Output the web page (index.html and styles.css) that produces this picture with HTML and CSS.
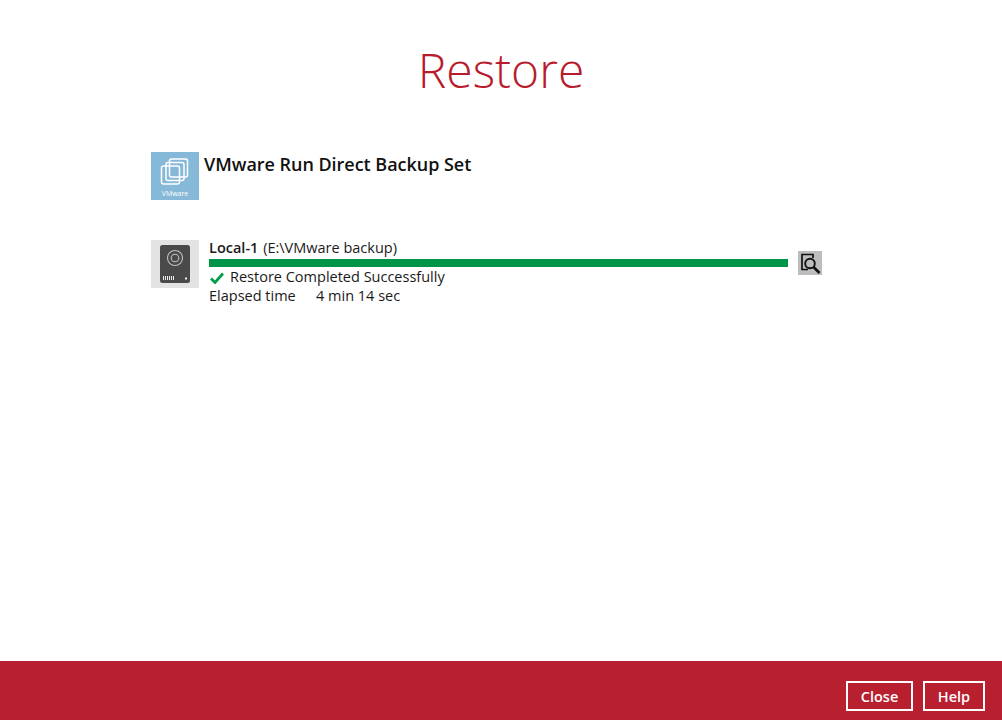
FILE: index.html
```html
<!DOCTYPE html>
<html lang="en">
<head>
<meta charset="utf-8">
<title>Restore</title>
<link rel="stylesheet" href="styles.css">
</head>
<body>
<main class="main">
  <h1 class="title">Restore</h1>
  <section class="set">
    <div class="set-icon">
      <svg class="vm-svg" width="30" height="30" viewBox="0 0 30 30" fill="none" stroke="#fff" stroke-width="1.5">
        <rect x="9.5" y="1" width="18" height="18" rx="2"/>
        <rect x="6" y="4.5" width="18" height="18" rx="2"/>
        <rect x="1.5" y="8" width="18" height="18" rx="2"/>
      </svg>
      <span class="vm-label">VMware</span>
    </div>
    <h2 class="set-name">VMware Run Direct Backup Set</h2>
  </section>
  <section class="dest">
    <div class="dest-icon">
      <svg width="30" height="38" viewBox="0 0 30 38">
        <rect width="30" height="38" rx="2.5" fill="#4a4a4a"/>
        <circle cx="15" cy="13" r="7.5" fill="none" stroke="#c0c0c0" stroke-width="1.1"/>
        <circle cx="15" cy="13" r="3.8" fill="none" stroke="#c0c0c0" stroke-width="1.1"/>
        <path d="M3.5 31v4M5.5 31v4M7.5 31v4M9.5 31v4M11.5 31v4M13.5 31v4" stroke="#eee" stroke-width="1"/>
        <rect x="25" y="32.5" width="2" height="2" fill="#eee"/>
      </svg>
    </div>
    <div class="dest-body">
      <div class="dest-name"><b class="dest-strong">Local-1</b> <span class="dest-path">(E:\VMware backup)</span></div>
      <div class="bar"></div>
      <div class="status">
        <svg class="check" width="14" height="12" viewBox="0 0 14 12"><path d="M1 6.5 L5 10.5 L13 1.5" fill="none" stroke="#00a04a" stroke-width="2.8"/></svg>
        <span>Restore Completed Successfully</span>
      </div>
      <div class="elapsed"><span class="elapsed-label">Elapsed time</span><span>4 min 14 sec</span></div>
    </div>
    <button class="log-btn" type="button" aria-label="Show log">
      <svg width="24" height="24" viewBox="0 0 24 24" fill="none" stroke="#111">
        <path d="M10 18.5H4V3.5H15V7" stroke-width="1.7"/>
        <circle cx="12" cy="12.5" r="4.8" stroke-width="1.9"/>
        <path d="M15.5 16L21.5 22" stroke-width="2.6"/>
      </svg>
    </button>
  </section>
</main>
<footer class="footer">
  <button class="btn btn-close" type="button">Close</button>
  <button class="btn btn-help" type="button">Help</button>
</footer>
</body>
</html>
```

FILE: styles.css
```css
* { box-sizing: border-box; }
html, body { margin: 0; height: 100%; }
body {
  display: flex;
  flex-direction: column;
  height: 720px;
  overflow: hidden;
  background: #fff;
  color: #1a1a1a;
  font-family: "Open Sans", sans-serif;
  font-size: 14.5px;
}
.main { flex: 1; padding: 0 151px; }
.title {
  margin: 0;
  padding-top: 37px;
  height: 152px;
  text-align: center;
  font-size: 48px;
  line-height: 66px;
  font-weight: 300;
  color: #b81c2c;
}
.set { display: flex; height: 88px; }
.set-icon {
  position: relative;
  width: 48px;
  height: 48px;
  background: #86b8d8;
  flex: none;
}
.vm-svg { position: absolute; left: 9px; top: 6px; }
.vm-label {
  position: absolute;
  left: 0;
  right: 0;
  top: 37px;
  text-align: center;
  font-size: 7px;
  line-height: 10px;
  font-weight: 400;
  color: #fff;
}
.set-name {
  margin: 0 0 0 5px;
  font-size: 18px;
  line-height: 24px;
  font-weight: 600;
  letter-spacing: -0.03px;
  color: #111;
}
.dest { display: flex; align-items: flex-start; }
.dest-icon {
  width: 48px;
  height: 48px;
  background: #e3e3e3;
  flex: none;
  display: flex;
  align-items: center;
  justify-content: center;
}
.dest-body { width: 579px; margin-left: 10px; }
.dest-name { height: 19px; line-height: 16px; }
.dest-strong { font-weight: 600; }
.dest-path { margin-left: 1px; }
.bar { height: 8px; background: #009448; }
.status { display: flex; align-items: center; height: 19px; line-height: 17px; }
.check { margin: 3px 6px 0 1px; flex: none; }
.elapsed { line-height: 20px; }
.elapsed-label { display: inline-block; width: 107px; }
.log-btn {
  width: 24px;
  height: 24px;
  margin: 11px 0 0 10px;
  padding: 0;
  border: 0;
  background: #bdbdbd;
  flex: none;
}
.log-btn svg { display: block; }
.footer {
  height: 59px;
  flex: none;
  background: #b81f2f;
  display: flex;
  justify-content: flex-end;
  gap: 10px;
  padding: 20px 17px 0 0;
}
.btn {
  height: 30px;
  border: 2px solid #fff;
  background: transparent;
  color: #fff;
  font-family: "Open Sans", sans-serif;
  font-size: 14.5px;
  font-weight: 600;
  padding: 0;
}
.btn-close { width: 67px; }
.btn-help { width: 62px; }
```
